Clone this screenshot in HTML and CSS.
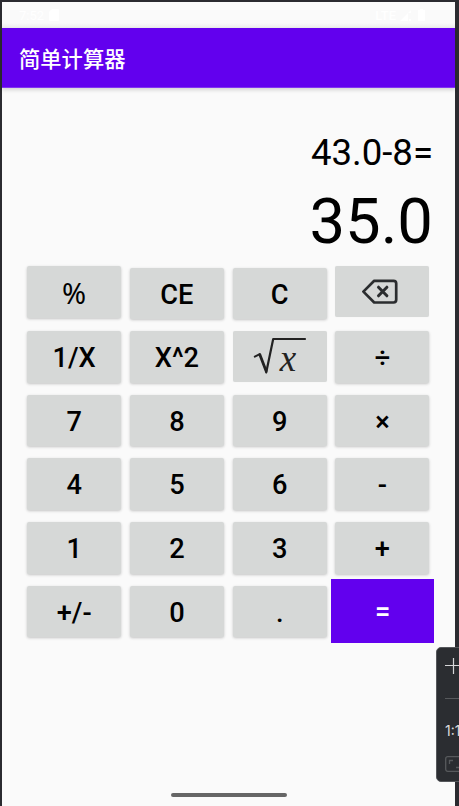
FILE: index.html
```html
<!DOCTYPE html>
<html lang="zh-CN">

<head>
    <meta charset="UTF-8">
    <meta name="viewport" content="width=device-width, initial-scale=1.0">
    <title>简单计算器</title>
    <link rel="stylesheet" href="styles.css">
</head>

<body>
    <div class="phone">
        <div class="status-bar">
            <span class="time">7:52</span>
            <svg class="sd-card" width="10" height="12" viewBox="0 0 10 12"><path d="M3 0h6a1 1 0 0 1 1 1v10a1 1 0 0 1-1 1H1a1 1 0 0 1-1-1V3z" fill="#fff"/></svg>
            <span class="network">LTE</span>
            <svg width="11" height="11" viewBox="0 0 11 11"><path d="M0 11L11 0v3H8v8zM9 9h2v2H9z" fill="#fff"/></svg>
            <svg class="battery" width="7" height="12" viewBox="0 0 7 12"><path d="M2 0h3v1h2v11H0V1h2z" fill="#fff"/></svg>
        </div>

        <header class="app-bar">
            <h1>简单计算器</h1>
        </header>

        <main class="calculator">
            <div class="expression">43.0-8=</div>
            <div class="result">35.0</div>

            <div class="keys">
                <button class="key percent">%</button>
                <button class="key clear">CE</button>
                <button class="key clear">C</button>
                <button class="key flat delete" aria-label="Delete">
                    <svg width="36" height="26" viewBox="0 0 36 26" fill="none" stroke="#2b2d2f" stroke-linejoin="round" stroke-linecap="round">
                        <path d="M12.2 1.8H31.5Q34.2 1.8 34.2 4.5V20.8Q34.2 23.5 31.5 23.5H12.2L1.4 12.6z" stroke-width="2.7"/>
                        <path d="M16.5 8.2l8.4 8.6M24.9 8.2l-8.4 8.6" stroke-width="3"/>
                    </svg>
                </button>

                <button class="key">1/X</button>
                <button class="key">X^2</button>
                <button class="key flat root">
                    <svg width="54" height="38" viewBox="0 0 54 38" fill="none" stroke="#222" stroke-linejoin="round" stroke-linecap="round">
                        <path d="M1.8 19.6l5-2.4" stroke-width="2"/>
                        <path d="M6.8 17.6l6.3 16.4" stroke-width="2.8"/>
                        <path d="M13.2 35.5L20.2 2H52" stroke-width="2.2"/>
                    </svg>
                    <span class="radicand">x</span>
                </button>
                <button class="key">÷</button>

                <button class="key">7</button>
                <button class="key">8</button>
                <button class="key">9</button>
                <button class="key">×</button>

                <button class="key">4</button>
                <button class="key">5</button>
                <button class="key">6</button>
                <button class="key">-</button>

                <button class="key">1</button>
                <button class="key">2</button>
                <button class="key">3</button>
                <button class="key">+</button>

                <button class="key">+/-</button>
                <button class="key">0</button>
                <button class="key">.</button>
                <button class="key equals">=</button>
            </div>
        </main>

        <div class="home-indicator"></div>
    </div>

    <!-- Emulator zoom panel -->
    <aside class="zoom-panel">
        <svg class="plus" width="16" height="16" viewBox="0 0 16 16"><path d="M0 7.5h16M8.5 0v16" stroke="#d6d6d8" stroke-width="1.2"/></svg>
        <hr>
        <span class="ratio">1:1</span>
        <svg class="fit" width="22" height="16" viewBox="0 0 22 16" fill="none" stroke="#57595c" stroke-width="1.3"><rect x=".7" y=".7" width="20.6" height="14.6" rx="2"/><path d="M4.5 8V4.5H8M11 11.5h4V8"/></svg>
    </aside>
</body>

</html>
```
FILE: styles.css
```css
* {
    margin: 0;
    padding: 0;
    box-sizing: border-box;
}

body {
    width: 459px;
    height: 806px;
    padding: 2px 4px 0 2px;
    overflow: hidden;
    position: relative;
    background-color: #2b2b30;
    font-family: Roboto, "Noto Sans CJK SC", sans-serif;
}

.phone {
    height: 804px;
    display: flex;
    flex-direction: column;
    background-color: #fafafa;
}

/* White on near white, barely visible */
.status-bar {
    height: 26px;
    padding: 0 30px 0 17px;
    display: flex;
    align-items: center;
    color: #fff;
    font-size: 13px;
    background: linear-gradient(#fafafa 21px, #ececec);
}

.sd-card {
    margin-left: 5px;
}

.network {
    margin-left: auto;
    margin-right: 4px;
    font-weight: 500;
}

.battery {
    margin-left: 7px;
}

/* App bar */
.app-bar {
    height: 60px;
    flex: none;
    padding-left: 17px;
    display: flex;
    align-items: center;
    background-color: #6200ee;
    border-bottom: 1px solid #8133f1;
    box-shadow: 0 2px 4px rgba(0, 0, 0, 0.16);
    color: #fff;
}

.app-bar h1 {
    font-size: 21.3px;
    font-weight: 500;
    line-height: 30px;
    padding-top: 4px;
}

/* Display */
.calculator {
    padding: 42px 21px 0;
    flex: 1;
    color: #000;
}

.expression {
    height: 46px;
    line-height: 46px;
    padding-right: 1px;
    font-size: 36.6px;
    text-align: right;
}

.result {
    height: 85px;
    line-height: 90px;
    padding-right: 1px;
    font-size: 63.4px;
    text-align: right;
}

/* Keypad */
.keys {
    width: 411px;
    display: grid;
    grid-template-columns: repeat(4, 1fr);
    grid-template-rows: repeat(6, 63.7px);
}

.key {
    height: 51.7px;
    margin: 6.3px 4.6px 0 4.2px;
    padding-top: 2px;
    display: flex;
    align-items: center;
    justify-content: center;
    border: none;
    border-radius: 2px;
    background-color: #d6d8d7;
    box-shadow: 0 1px 3px rgba(0, 0, 0, 0.22);
    color: #000;
    font-family: inherit;
    font-size: 27.2px;
    font-weight: 500;
}

.percent {
    margin-top: 5px;
    font-family: "Noto Sans", sans-serif;
    font-size: 29px;
    font-weight: 400;
}

.clear {
    margin-top: 6.6px;
    padding-top: 3px;
}

.flat {
    height: 51px;
    padding-top: 0;
    box-shadow: 0 0 1px rgba(0, 0, 0, 0.1);
}

.delete {
    margin-top: 5px;
    padding-right: 4px;
}

.root {
    position: relative;
}

.radicand {
    position: absolute;
    left: 47px;
    top: 7px;
    color: #222;
    font-family: "Liberation Serif", serif;
    font-size: 37px;
    font-style: italic;
    font-weight: 400;
    line-height: 42px;
}

.equals {
    height: 63.7px;
    margin: 0;
    border-radius: 0;
    background-color: #6200ee;
    box-shadow: none;
    color: #fff;
}

.home-indicator {
    width: 116px;
    height: 4px;
    margin: 0 auto 9px;
    border-radius: 2px;
    background-color: #666;
}

/* Zoom panel floats over the right edge of the phone */
.zoom-panel {
    position: absolute;
    left: 436px;
    top: 647px;
    width: 40px;
    height: 135px;
    padding: 10px 0 0 8px;
    display: flex;
    flex-direction: column;
    align-items: flex-start;
    border: 1px solid #55575b;
    border-radius: 5px;
    background-color: #2b2d31;
    color: #dcdcde;
}

.zoom-panel hr {
    width: 30px;
    margin-top: 24px;
    border: none;
    border-top: 1px solid #57595c;
}

.ratio {
    margin-top: 23px;
    font-family: Inter, sans-serif;
    font-size: 14px;
    line-height: 18px;
}

.fit {
    margin-top: 16px;
}
```
